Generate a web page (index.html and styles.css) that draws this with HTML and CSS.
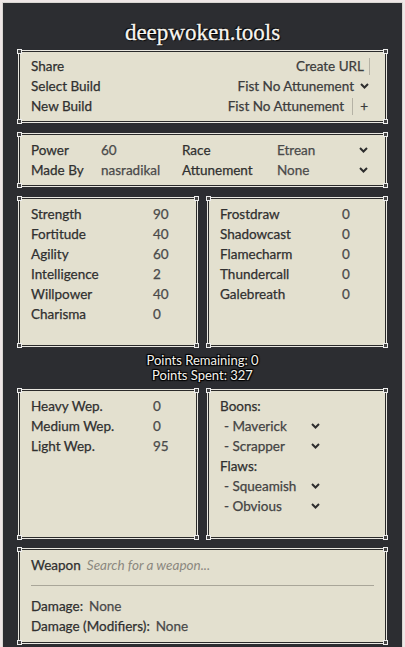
FILE: index.html
```html
<!DOCTYPE html>
<html lang="en">
<head>
    <meta charset="UTF-8">
    <meta name="viewport" content="width=device-width, initial-scale=1.0">
    <title>deepwoken.tools</title>
    <link rel="stylesheet" href="styles.css">
</head>
<body>
    <div class="page">
        <h1 class="title">deepwoken.tools</h1>

        <div class="panel build">
            <div class="row">
                <span class="label">Share</span>
                <span class="ctrl">Create URL<i class="bar"></i></span>
            </div>
            <div class="row">
                <span class="label">Select Build</span>
                <span class="ctrl pick">Fist No Attunement<svg class="chev" viewBox="0 0 9 6"><path d="M1 1l3.5 3.5L8 1"/></svg></span>
            </div>
            <div class="row">
                <span class="label">New Build</span>
                <span class="ctrl add">Fist No Attunement<i class="bar"></i><b>+</b></span>
            </div>
        </div>

        <div class="panel info">
            <span class="label">Power</span><span class="val">60</span>
            <span class="label">Race</span><span class="val">Etrean</span>
            <svg class="chev" viewBox="0 0 9 6"><path d="M1 1l3.5 3.5L8 1"/></svg>
            <span class="label">Made By</span><span class="val">nasradikal</span>
            <span class="label">Attunement</span><span class="val">None</span>
            <svg class="chev" viewBox="0 0 9 6"><path d="M1 1l3.5 3.5L8 1"/></svg>
        </div>

        <div class="pair">
            <div class="panel stats">
                <span class="label">Strength</span><span class="val">90</span>
                <span class="label">Fortitude</span><span class="val">40</span>
                <span class="label">Agility</span><span class="val">60</span>
                <span class="label">Intelligence</span><span class="val">2</span>
                <span class="label">Willpower</span><span class="val">40</span>
                <span class="label">Charisma</span><span class="val">0</span>
            </div>
            <div class="panel stats">
                <span class="label">Frostdraw</span><span class="val">0</span>
                <span class="label">Shadowcast</span><span class="val">0</span>
                <span class="label">Flamecharm</span><span class="val">0</span>
                <span class="label">Thundercall</span><span class="val">0</span>
                <span class="label">Galebreath</span><span class="val">0</span>
            </div>
        </div>

        <div class="points">
            <div>Points Remaining: 0</div>
            <div>Points Spent: 327</div>
        </div>

        <div class="pair">
            <div class="panel stats">
                <span class="label">Heavy Wep.</span><span class="val">0</span>
                <span class="label">Medium Wep.</span><span class="val">0</span>
                <span class="label">Light Wep.</span><span class="val">95</span>
            </div>
            <div class="panel traits">
                <div class="label">Boons:</div>
                <div class="trait">- Maverick<svg class="chev" viewBox="0 0 9 6"><path d="M1 1l3.5 3.5L8 1"/></svg></div>
                <div class="trait">- Scrapper<svg class="chev" viewBox="0 0 9 6"><path d="M1 1l3.5 3.5L8 1"/></svg></div>
                <div class="label">Flaws:</div>
                <div class="trait">- Squeamish<svg class="chev" viewBox="0 0 9 6"><path d="M1 1l3.5 3.5L8 1"/></svg></div>
                <div class="trait">- Obvious<svg class="chev" viewBox="0 0 9 6"><path d="M1 1l3.5 3.5L8 1"/></svg></div>
            </div>
        </div>

        <div class="panel weapon">
            <div class="row-left">
                <span class="label">Weapon</span>
                <span class="search">Search for a weapon...</span>
            </div>
            <hr>
            <div class="row-left"><span class="label">Damage:</span><span class="val">None</span></div>
            <div class="row-left"><span class="label">Damage (Modifiers):</span><span class="val">None</span></div>
        </div>
    </div>
</body>
</html>
```

FILE: styles.css
```css
body{
    margin:0;
    background:#efe7e6;
    font-family:Lato,"Noto Sans",sans-serif;
    font-size:13.5px;
    color:#3a3a3a;
}
.page{
    margin:2px 2px 0;
    border:1px solid #d9d6d2;
    border-bottom:none;
    background:#2c2d31;
    padding:0 16px 10px;
    min-height:640px;
    box-sizing:border-box;
}
.title{
    margin:0 0 3px;
    padding-top:15px;
    font-family:"Liberation Serif","DejaVu Serif",serif;
    font-weight:normal;
    font-size:23px;
    line-height:30px;
    text-align:center;
    color:#f7f5ef;
    text-shadow:1px 1px 1px #000,-1px -1px 1px #000;
    -webkit-text-stroke:0.3px #f7f5ef;
}

/* beige boxes with the double frame */
.panel{
    position:relative;
    background:#e3e0cf;
    border:1px solid #2a2a2a;
    outline:1px solid #e9e7e0;
    padding:5px 11px;
    line-height:20px;
    -webkit-text-stroke:0.25px currentColor;
}
.panel::before{
    content:"";
    position:absolute;
    top:-3px;
    left:-3px;
    right:-3px;
    bottom:-3px;
    pointer-events:none;
    background:
        linear-gradient(#444,#444) left 1px top 1px/3px 3px no-repeat,
        linear-gradient(#444,#444) right 1px top 1px/3px 3px no-repeat,
        linear-gradient(#444,#444) left 1px bottom 1px/3px 3px no-repeat,
        linear-gradient(#444,#444) right 1px bottom 1px/3px 3px no-repeat,
        linear-gradient(#eee,#eee) left top/5px 5px no-repeat,
        linear-gradient(#eee,#eee) right top/5px 5px no-repeat,
        linear-gradient(#eee,#eee) left bottom/5px 5px no-repeat,
        linear-gradient(#eee,#eee) right bottom/5px 5px no-repeat;
}
.label{
    color:#303030;
}
.val{
    color:#4a4a4a;
}
.chev{
    width:9px;
    height:6px;
    fill:none;
    stroke:#2e2e2e;
    stroke-width:2;
}

.build{
    padding:4px 11px 5px;
    margin-bottom:12px;
}
.row{
    display:flex;
    justify-content:space-between;
    align-items:center;
}
.ctrl{
    display:flex;
    align-items:center;
    color:#3c3c3c;
}
.bar{
    display:inline-block;
    width:1px;
    height:17px;
    background:#b5b2a5;
    margin:0 4px 0 5px;
}
.pick .chev{
    margin:0 5px 0 6px;
}
.add .bar{
    margin:0 7px 0 8px;
}
.add b{
    font-weight:normal;
    margin-right:6px;
}

.info{
    display:grid;
    grid-template-columns:70px 81px 95px 1fr auto;
    align-items:center;
    margin-bottom:12px;
    padding:5px 17px 5px 11px;
}

.pair{
    display:grid;
    grid-template-columns:1fr 1fr;
    gap:11px;
}
.pair .panel{
    padding:5px 11px 21px;
}
.stats{
    display:grid;
    grid-template-columns:122px 1fr;
    align-content:start;
}
.trait{
    display:flex;
    align-items:center;
    justify-content:space-between;
    width:96px;
    padding-left:4px;
    color:#444;
}

.points{
    padding:7px 0;
    text-align:center;
    color:#f4f2ec;
    font-size:13px;
    line-height:15px;
    text-shadow:1px 1px 1px #000,-1px -1px 1px #000,1px -1px 1px #000,-1px 1px 1px #000;
}

.weapon{
    margin-top:11px;
    padding:5px 11px 6px;
}
.row-left{
    display:flex;
    gap:6px;
}
.search{
    font-style:italic;
    color:#8b887f;
    -webkit-text-stroke:0;
}
.weapon hr{
    border:none;
    border-top:1px solid #a9a699;
    margin:10px 0;
}
```
